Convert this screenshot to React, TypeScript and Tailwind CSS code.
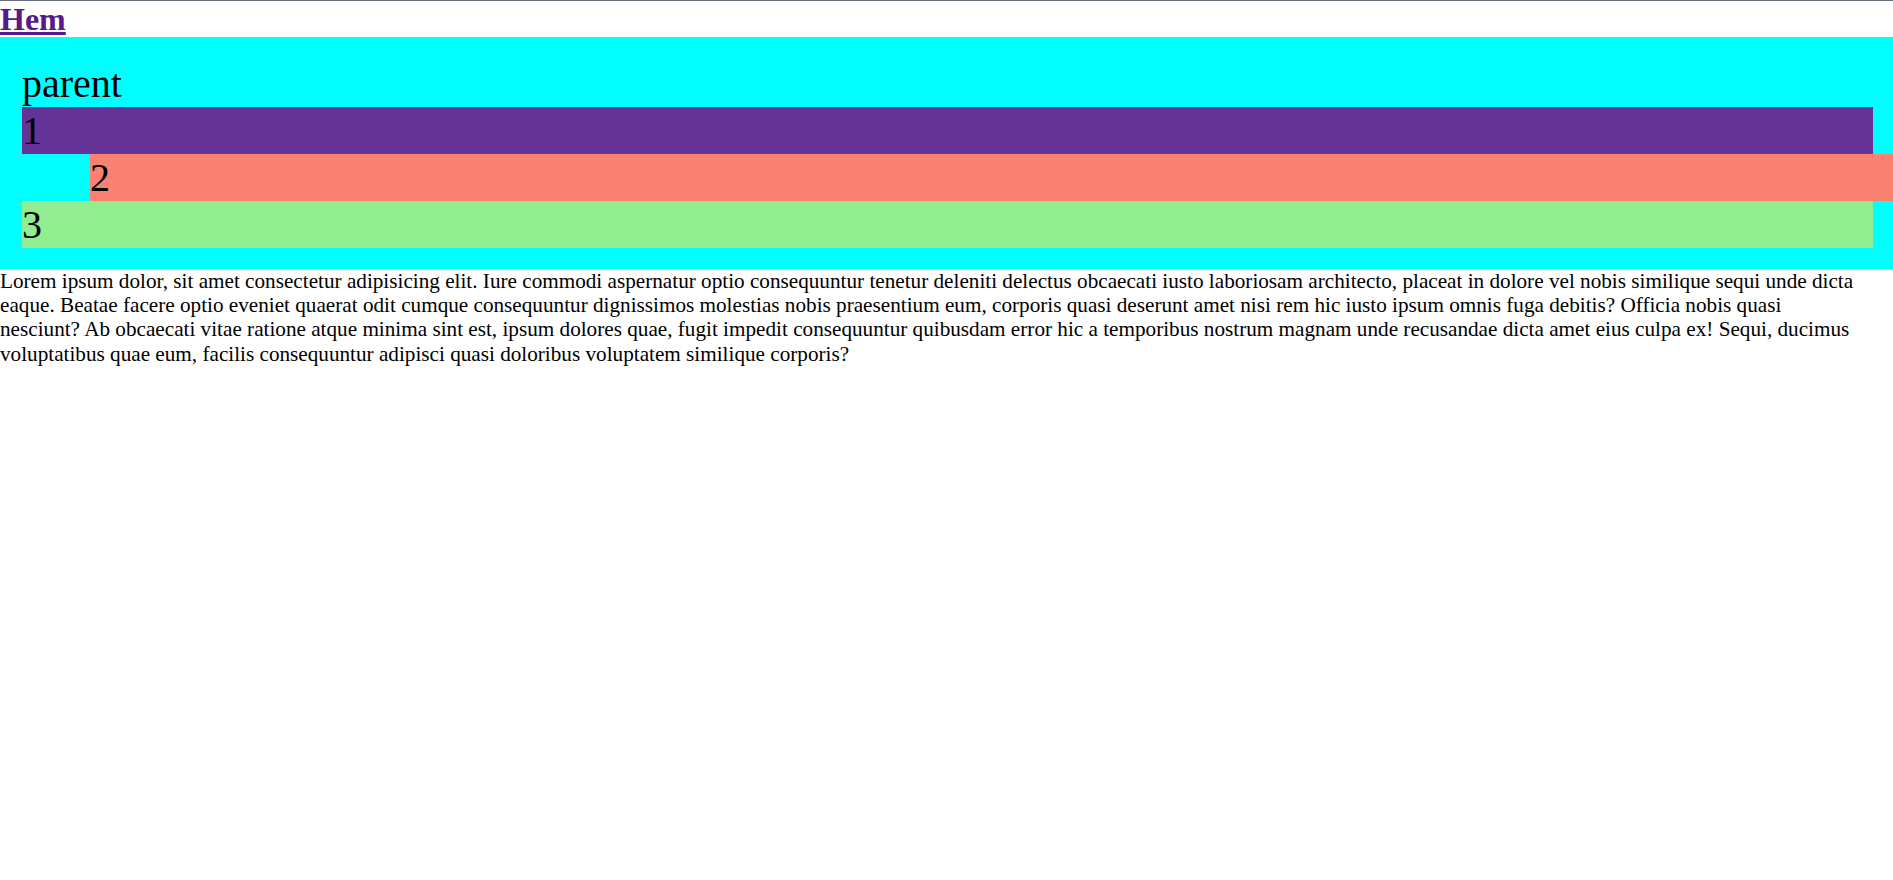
const lines = [
  "Lorem ipsum dolor, sit amet consectetur adipisicing elit. Iure commodi aspernatur optio consequuntur tenetur deleniti delectus obcaecati iusto laboriosam architecto, placeat in dolore vel nobis similique sequi unde dicta",
  "eaque. Beatae facere optio eveniet quaerat odit cumque consequuntur dignissimos molestias nobis praesentium eum, corporis quasi deserunt amet nisi rem hic iusto ipsum omnis fuga debitis? Officia nobis quasi",
  "nesciunt? Ab obcaecati vitae ratione atque minima sint est, ipsum dolores quae, fugit impedit consequuntur quibusdam error hic a temporibus nostrum magnam unde recusandae dicta amet eius culpa ex! Sequi, ducimus",
  "voluptatibus quae eum, facilis consequuntur adipisci quasi doloribus voluptatem similique corporis?",
];

export default function App() {
  return (
    <div className="min-h-screen overflow-hidden bg-white font-['Liberation_Serif',serif] text-black border-t border-[#66707a]">
      <h1 className="m-0 text-[32px] font-bold leading-[36px]">
        <a href="#" className="text-[#551a8b] underline">
          Hem
        </a>
      </h1>
      <div className="bg-[#00ffff] pt-[23px] pb-[21px] pl-[22px] pr-[20px] text-[40px] leading-[47px]">
        <div>parent</div>
        <div className="bg-[#663399]">1</div>
        <div className="bg-[#fa8072] ml-[68px] -mr-[68px]">2</div>
        <div className="bg-[#90ee90]">3</div>
      </div>
      <p className="m-0 text-[21.2px] leading-[24.2px]">
        {lines.map((line, i) => (
          <span key={i}>
            {line}
            {i < lines.length - 1 && <br />}
          </span>
        ))}
      </p>
    </div>
  );
}
